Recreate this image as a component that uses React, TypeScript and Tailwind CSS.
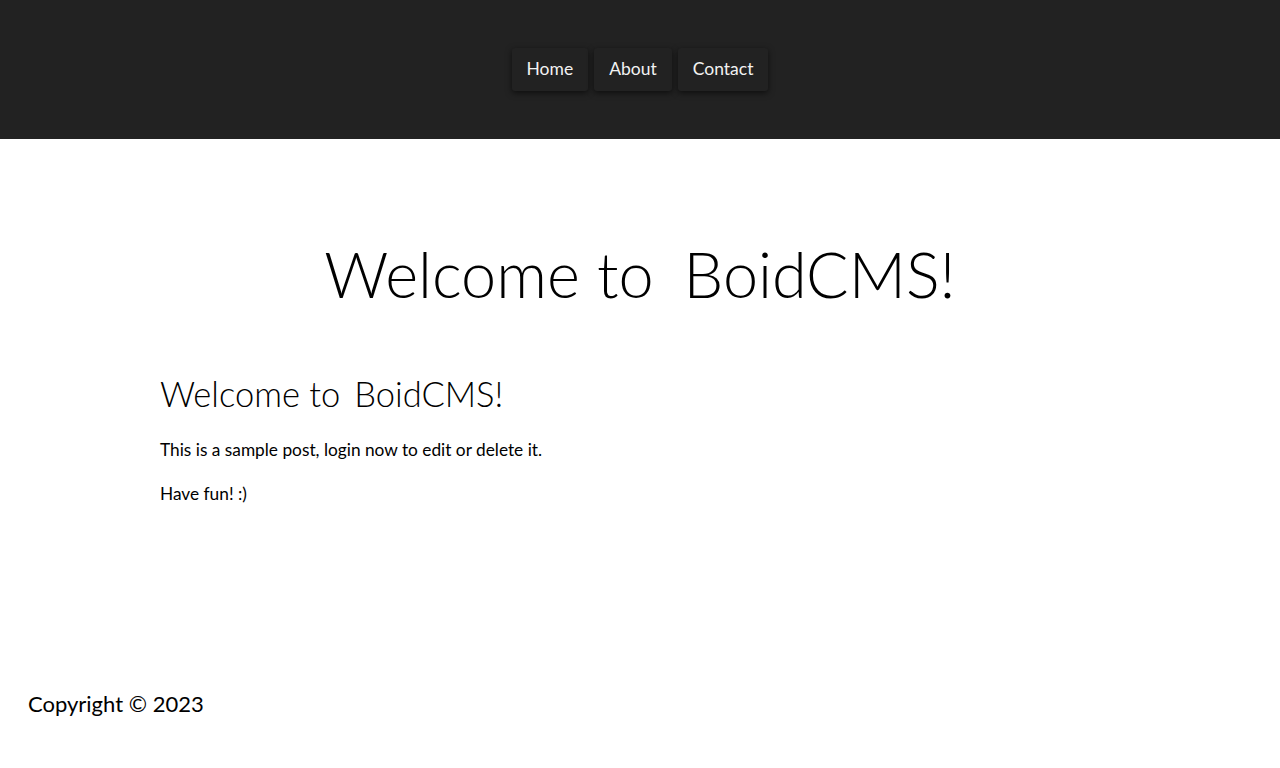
export default function App() {
  const links = ["Home", "About", "Contact"];

  return (
    <div className="min-h-[768px] bg-white text-black font-['Lato',sans-serif] flex flex-col">
      {/* Header */}
      <header className="h-[139px] bg-[#222222] flex items-center justify-center">
        <nav className="flex gap-[6px]">
          {links.map((item) => (
            <a
              key={item}
              href="#"
              className="h-[43px] px-[15px] flex items-center rounded-[3px] bg-[#222222] text-[#f2f2f2] text-[17.5px] shadow-[0_2px_6px_rgba(0,0,0,0.6)]"
            >
              {item}
            </a>
          ))}
        </nav>
      </header>

      {/* Main */}
      <main className="flex-1">
        <h1 className="mt-[103px] text-center text-[63px] font-light leading-none">
          Welcome to<span className="ml-[30px]">BoidCMS!</span>
        </h1>
        <article className="mx-[160px] mt-[72px]">
          <h2 className="text-[34.5px] font-light leading-none">
            Welcome to<span className="ml-[14px]">BoidCMS!</span>
          </h2>
          <p className="mt-[25px] text-[17.3px]">This is a sample post, login now to edit or delete it.</p>
          <p className="mt-[19px] text-[17.3px]">Have fun! :)</p>
        </article>
      </main>

      {/* Footer */}
      <footer className="px-[28px] pb-[48px] text-[22px]">Copyright © 2023</footer>
    </div>
  );
}
